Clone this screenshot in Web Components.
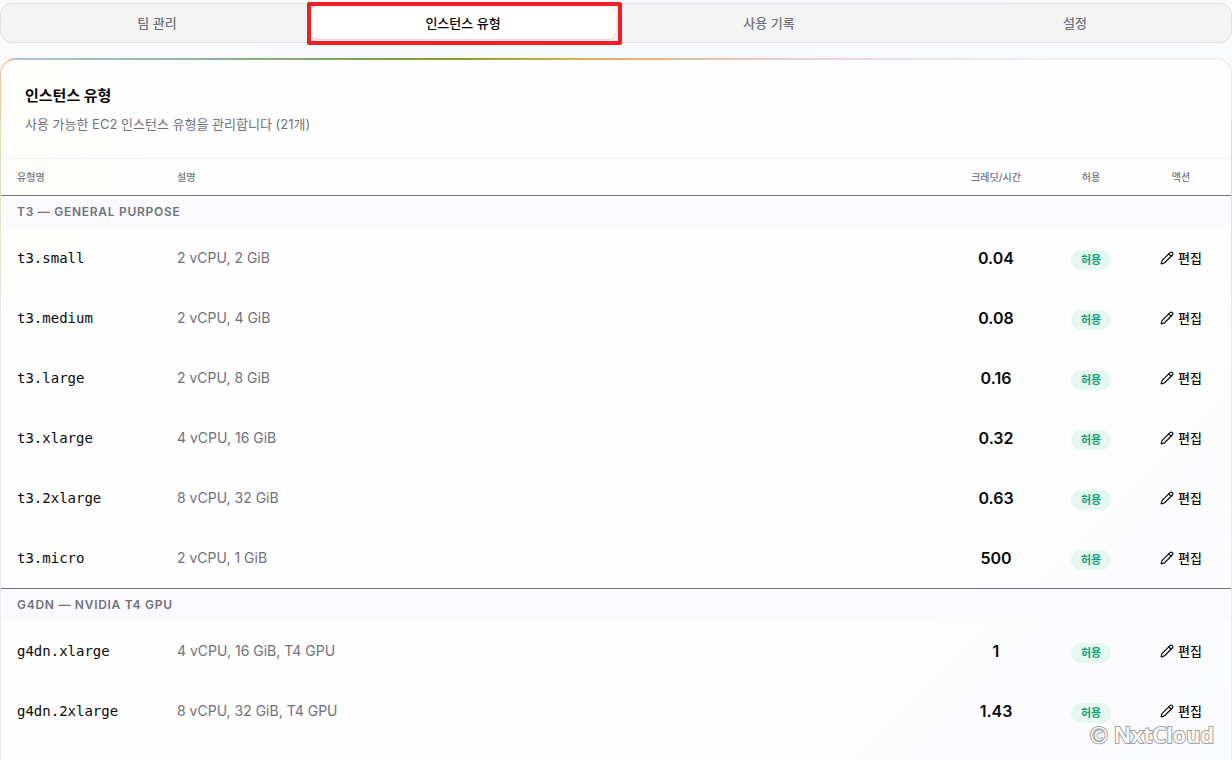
<!DOCTYPE html>
<html lang="ko">
<head>
<meta charset="utf-8">
<meta name="viewport" content="width=device-width, initial-scale=1">
<title>인스턴스 유형</title>
<style>
  body {
    margin: 0;
    height: 100vh;
    overflow: hidden;
    font-family: Inter, "Noto Sans CJK KR", sans-serif;
    font-size: 14px;
    line-height: 20px;
    color: #09090b;
    background: linear-gradient(90deg, #fafafb, #f8f9fd 40%, #f8fafc);
  }
</style>
</head>
<body>
<admin-page>
  <tab-bar slot="nav">
    <tab-item>팀 관리</tab-item>
    <tab-item active>인스턴스 유형</tab-item>
    <tab-item>사용 기록</tab-item>
    <tab-item>설정</tab-item>
  </tab-bar>
  <glow-card>
    <span slot="title">인스턴스 유형</span>
    <span slot="description">사용 가능한 EC2 인스턴스 유형을 관리합니다 (21개)</span>
    <instance-table></instance-table>
  </glow-card>
  <water-mark slot="mark">© NxtCloud</water-mark>
</admin-page>

<script>
const define = (name, html, setup) => {
  const template = document.createElement('template');
  template.innerHTML = html;
  customElements.define(name, class extends HTMLElement {
    constructor() {
      super();
      this.attachShadow({ mode: 'open' }).append(template.content.cloneNode(true));
    }
    connectedCallback() {
      if (setup) setup(this, this.shadowRoot);
    }
  });
};

define('admin-page', `
  <style>
    :host { display: flex; flex-direction: column; gap: 15px; height: 100%; box-sizing: border-box; padding-top: 3px; position: relative; }
    main { flex: 1; display: flex; flex-direction: column; min-height: 0; }
  </style>
  <slot name="nav"></slot>
  <main><slot></slot></main>
  <slot name="mark"></slot>`);

define('tab-bar', `
  <style>
    :host { display: block; }
    nav { display: flex; padding: 3px; background: #f3f3f3; border: 1px solid #e1e1e5; border-radius: 12px; }
  </style>
  <nav><slot></slot></nav>`);

define('tab-item', `
  <style>
    :host { flex: 1; display: block; position: relative; }
    button { width: 100%; height: 32px; padding: 0; border: 0; border-radius: 8px; background: none; color: #71717a; font: 500 13px/20px Inter, "Noto Sans CJK KR", sans-serif; }
    :host([active]) button { background: #fff; color: #09090b; box-shadow: 0 1px 2px #0002; }
    .marker { display: none; }
    :host([active]) .marker { display: block; position: absolute; inset: -5px -6px -6px -3px; border: 4px solid #f01e28; border-radius: 2px; pointer-events: none; }
  </style>
  <button type="button"><slot></slot></button>
  <span class="marker"></span>`);

define('glow-card', `
  <style>
    :host {
      flex: 1; display: flex; flex-direction: column; min-height: 0;
      border: 1px solid transparent; border-top-width: 2px; border-bottom: 0;
      border-radius: 16px 16px 0 0;
      background:
        radial-gradient(circle at 0 15%, #fff8e830, #fff0 160px) padding-box,
        linear-gradient(135deg, #fefefe 70%, #fafbfe) padding-box,
        linear-gradient(90deg, #b4c4d8, #8fb5a0 16%, #7aa45a 28%, #8f9a25 37%, #d9b050 47%, #eab890 54%, #f0cbd8 65%, #e8e2f0 76%, #f0f0f4 84%) border-box 0 0 / 100% 2px no-repeat,
        linear-gradient(90deg, #e9c9a0, #ececef 5%) border-box 0 0 / 100% 60px no-repeat,
        linear-gradient(#ecd5b0, #e8e0c8 180px, #ececf0 280px) border-box;
    }
    header { padding: 24px; display: flex; flex-direction: column; gap: 6px; }
    h2 { margin: 0; font-size: 15px; line-height: 24px; font-weight: 700; }
    p { margin: 0; font-size: 13px; line-height: 20px; color: #71717a; }
  </style>
  <header>
    <h2><slot name="title"></slot></h2>
    <p><slot name="description"></slot></p>
  </header>
  <slot></slot>`);

define('status-badge', `
  <style>
    :host { display: inline-block; padding: 0 10px; border-radius: 10px; background: #e6f7f1; color: #12a071; font-size: 11px; line-height: 20px; font-weight: 700; }
  </style>
  <slot></slot>`);

define('edit-button', `
  <style>
    :host { display: inline-block; }
    button { display: flex; align-items: center; gap: 4px; padding: 0; border: 0; background: none; color: #09090b; font: 500 13px/20px Inter, "Noto Sans CJK KR", sans-serif; }
    svg { width: 14px; height: 14px; fill: none; stroke: currentColor; stroke-width: 2; stroke-linecap: round; stroke-linejoin: round; }
  </style>
  <button type="button">
    <svg viewBox="0 0 24 24" aria-hidden="true"><path d="M21.17 6.81a1 1 0 0 0-3.98-3.98L3.84 16.17a2 2 0 0 0-.5.83l-1.32 4.35a.5.5 0 0 0 .62.62l4.35-1.32a2 2 0 0 0 .83-.5z"/><path d="m15 5 4 4"/></svg>
    <slot>편집</slot>
  </button>`);

define('water-mark', `
  <style>
    :host { position: absolute; right: 18px; bottom: 12px; font: 600 22px/28px "Noto Sans", sans-serif; color: #fafafa; -webkit-text-stroke: 2px #a0a0a0; paint-order: stroke fill; }
  </style>
  <slot></slot>`);

const groups = [
  ['T3 — GENERAL PURPOSE', [
    ['t3.small', '2 vCPU, 2 GiB', '0.04'],
    ['t3.medium', '2 vCPU, 4 GiB', '0.08'],
    ['t3.large', '2 vCPU, 8 GiB', '0.16'],
    ['t3.xlarge', '4 vCPU, 16 GiB', '0.32'],
    ['t3.2xlarge', '8 vCPU, 32 GiB', '0.63'],
    ['t3.micro', '2 vCPU, 1 GiB', '500'],
  ]],
  ['G4DN — NVIDIA T4 GPU', [
    ['g4dn.xlarge', '4 vCPU, 16 GiB, T4 GPU', '1'],
    ['g4dn.2xlarge', '8 vCPU, 32 GiB, T4 GPU', '1.43'],
  ]],
];

define('instance-table', `
  <style>
    :host { display: block; border-top: 1px solid #f1f1f4; }
    table { width: 100%; table-layout: fixed; border-collapse: separate; border-spacing: 0; }
    .name { width: 160px; } .credit { width: 110px; } .allow { width: 80px; } .action { width: 100px; }
    th, td { box-sizing: border-box; padding: 0 16px; text-align: left; vertical-align: middle; }
    thead th { height: 36px; font-size: 10px; line-height: 16px; font-weight: 500; color: #71717a; }
    tbody th.group { height: 33px; border-top: 1px solid #6f6f78; background: #fafafd; color: #71717a; font-size: 12px; line-height: 16px; font-weight: 600; letter-spacing: 0.06em; }
    td, th.type { height: 60px; }
    th.type { font: 400 14px/20px "DejaVu Sans Mono", monospace; }
    td { color: #71717a; }
    .center { text-align: center; padding: 0; }
    td.value { color: #09090b; font-size: 16px; line-height: 24px; font-weight: 600; }
    td.control { padding-top: 2px; }
  </style>
  <table>
    <colgroup><col class="name"><col><col class="credit"><col class="allow"><col class="action"></colgroup>
    <thead><tr>
      <th scope="col">유형명</th><th scope="col">설명</th>
      <th scope="col" class="center">크레딧/시간</th><th scope="col" class="center">허용</th><th scope="col" class="center">액션</th>
    </tr></thead>
  </table>`, (host, root) => {
  root.querySelector('table').insertAdjacentHTML('beforeend', groups.map(([title, rows]) => `
    <tbody>
      <tr><th class="group" colspan="5" scope="rowgroup">${title}</th></tr>
      ${rows.map(([type, spec, credit]) => `<tr>
        <th class="type" scope="row">${type}</th><td>${spec}</td>
        <td class="center value">${credit}</td>
        <td class="center control"><status-badge>허용</status-badge></td>
        <td class="center control"><edit-button></edit-button></td>
      </tr>`).join('')}
    </tbody>`).join(''));
});
</script>
</body>
</html>
